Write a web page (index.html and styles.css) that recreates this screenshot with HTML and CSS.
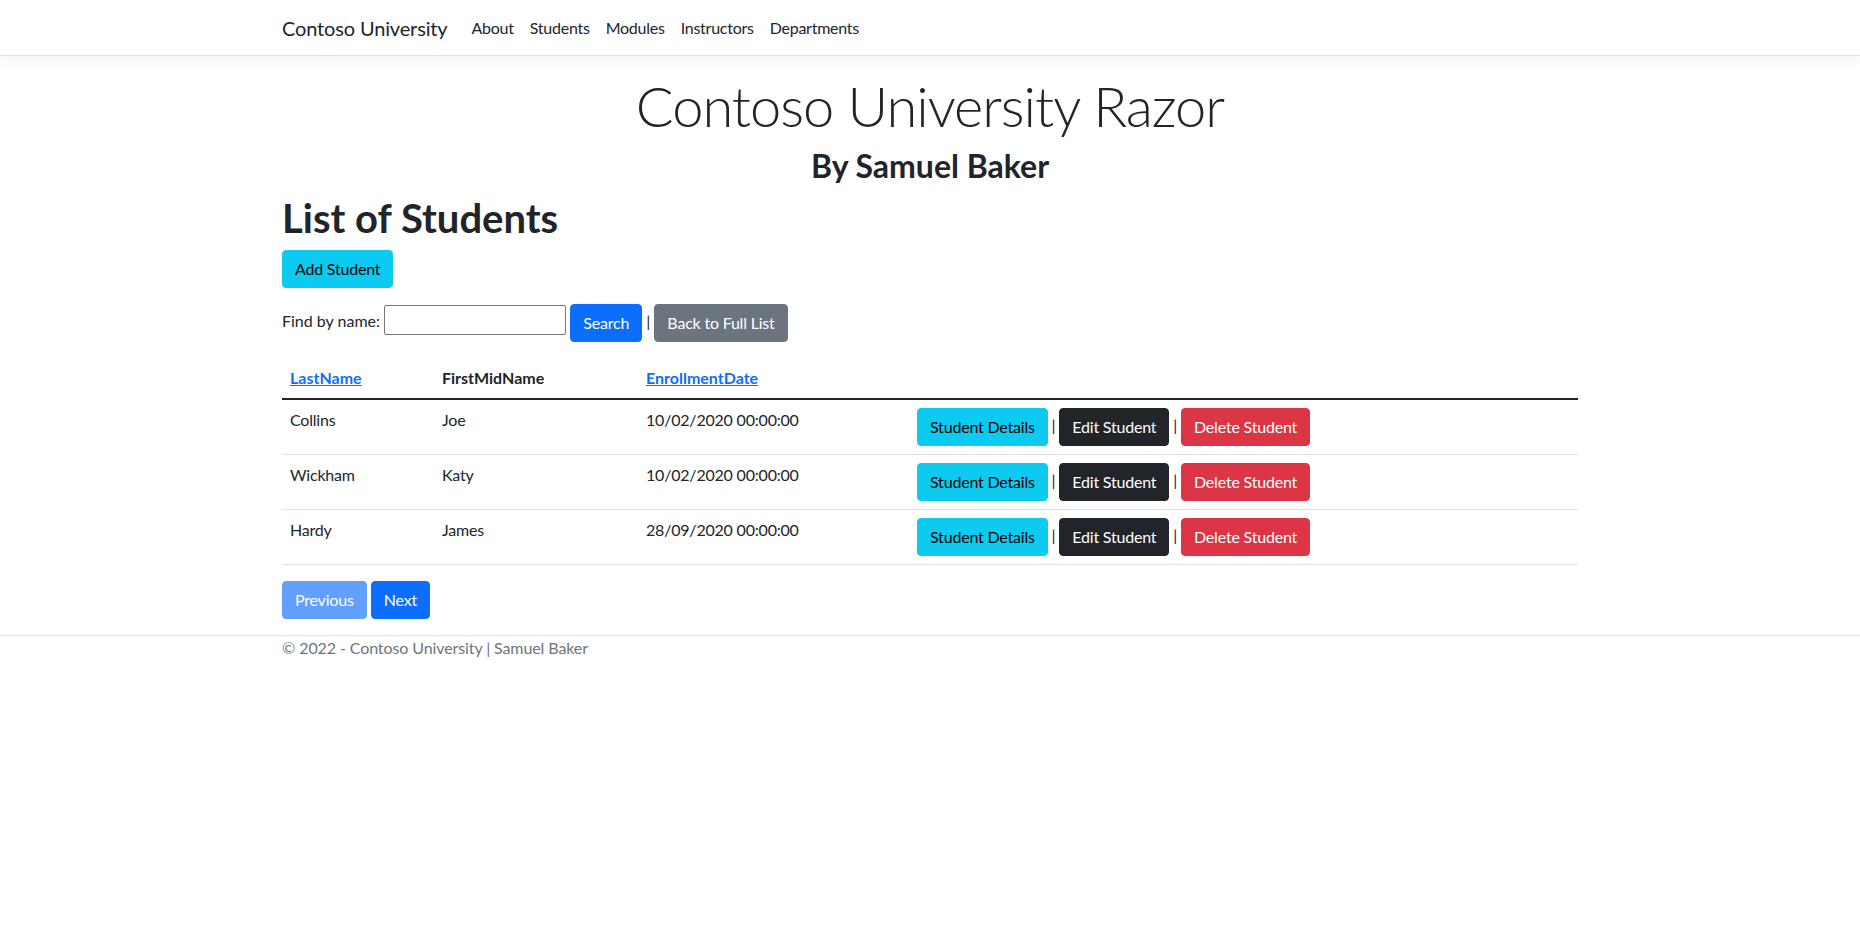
FILE: index.html
```html
<!DOCTYPE html>
<html lang="en">
<head>
<meta charset="utf-8">
<title>Students - Contoso University</title>
<link rel="stylesheet" href="styles.css">
</head>
<body>
<header>
  <nav class="navbar">
    <div class="container nav-inner">
      <a class="brand" href="#">Contoso University</a>
      <ul class="nav-links">
        <li><a href="#">About</a></li>
        <li><a href="#">Students</a></li>
        <li><a href="#">Modules</a></li>
        <li><a href="#">Instructors</a></li>
        <li><a href="#">Departments</a></li>
      </ul>
    </div>
  </nav>
</header>
<div class="container">
  <main class="main">
    <div class="hero">
      <h1 class="display">Contoso University Razor</h1>
      <h2 class="byline">By Samuel Baker</h2>
    </div>
    <h1 class="page-title">List of Students</h1>
    <p class="para"><a class="btn btn-info" href="#">Add Student</a></p>
    <form class="search-form">
      <p class="para">Find by name: <input type="text" class="search-input"> <input type="submit" value="Search" class="btn btn-primary"> | <a class="btn btn-secondary" href="#">Back to Full List</a></p>
    </form>
    <table class="table">
      <thead>
        <tr>
          <th class="c1"><a href="#">LastName</a></th>
          <th class="c2">FirstMidName</th>
          <th class="c3"><a href="#">EnrollmentDate</a></th>
          <th class="c4"></th>
        </tr>
      </thead>
      <tbody>
        <tr>
          <td>Collins</td>
          <td>Joe</td>
          <td>10/02/2020 00:00:00</td>
          <td><a class="btn btn-info" href="#">Student Details</a> | <a class="btn btn-dark" href="#">Edit Student</a> | <a class="btn btn-danger" href="#">Delete Student</a></td>
        </tr>
        <tr>
          <td>Wickham</td>
          <td>Katy</td>
          <td>10/02/2020 00:00:00</td>
          <td><a class="btn btn-info" href="#">Student Details</a> | <a class="btn btn-dark" href="#">Edit Student</a> | <a class="btn btn-danger" href="#">Delete Student</a></td>
        </tr>
        <tr>
          <td>Hardy</td>
          <td>James</td>
          <td>28/09/2020 00:00:00</td>
          <td><a class="btn btn-info" href="#">Student Details</a> | <a class="btn btn-dark" href="#">Edit Student</a> | <a class="btn btn-danger" href="#">Delete Student</a></td>
        </tr>
      </tbody>
    </table>
    <a class="btn btn-primary disabled" href="#">Previous</a>
    <a class="btn btn-primary" href="#">Next</a>
  </main>
</div>
<footer class="footer">
  <div class="container">© 2022 - Contoso University | Samuel Baker</div>
</footer>
</body>
</html>
```

FILE: styles.css
```css
* { box-sizing: border-box; }
html { font-size: 16px; }
body {
  margin: 0;
  font-family: Lato, "Liberation Sans", sans-serif;
  font-size: 16px;
  line-height: 1.5;
  color: #212529;
  background: #fff;
}
a { color: #0d6efd; }
.container { width: 1320px; margin: 0 auto; padding: 0 12px; }

.navbar {
  background: #fff;
  border-bottom: 1px solid #dee2e6;
  box-shadow: 0 4px 12px rgba(0,0,0,.05);
  margin-bottom: 16px;
  padding: 8px 0 7px;
}
.nav-inner { display: flex; align-items: center; }
.brand {
  font-size: 20px;
  line-height: 30px;
  padding: 5px 0;
  margin-right: 16px;
  color: #212529;
  text-decoration: none;
  letter-spacing: -0.15px;
}
.nav-links { display: flex; list-style: none; margin: 0; padding: 0; }
.nav-links a {
  display: block;
  padding: 8px;
  color: #212529;
  text-decoration: none;
  letter-spacing: -0.25px;
}

.main { padding-bottom: 16px; }
.hero { text-align: center; }
.display {
  font-size: 56px;
  font-weight: 300;
  line-height: 1.2;
  margin: 0 0 8px;
  letter-spacing: -1px;
}
.byline { font-size: 32px; font-weight: 700; line-height: 1.2; margin: 0 0 8px; }
.page-title { font-size: 40px; font-weight: 700; line-height: 1.2; margin: 0 0 8px; }
.para { margin: 0 0 16px; }

.btn {
  display: inline-block;
  font-family: inherit;
  font-size: 16px;
  line-height: 24px;
  padding: 6px 12px;
  border: 1px solid transparent;
  border-radius: 4px;
  text-decoration: none;
  vertical-align: middle;
  cursor: pointer;
  letter-spacing: -0.2px;
}
.btn-info { background: #0dcaf0; border-color: #0dcaf0; color: #000; }
.btn-primary { background: #0d6efd; border-color: #0d6efd; color: #fff; }
.btn-secondary { background: #6c757d; border-color: #6c757d; color: #fff; }
.btn-dark { background: #212529; border-color: #212529; color: #fff; }
.btn-danger { background: #dc3545; border-color: #dc3545; color: #fff; }
.btn.disabled { opacity: .65; pointer-events: none; }

.search-form { margin: 0; }
.search-input {
  font-family: inherit;
  font-size: 16px;
  line-height: 24px;
  width: 182px;
  height: 30px;
  padding: 1px 2px;
  border: 1px solid #767676;
  border-radius: 2px;
  margin: 0;
}

.table {
  width: 100%;
  border-collapse: collapse;
  table-layout: fixed;
  margin-bottom: 16px;
  vertical-align: top;
}
.table th, .table td {
  padding: 8px;
  text-align: left;
  border-bottom: 1px solid #dee2e6;
}
.table td { vertical-align: top; letter-spacing: -0.2px; }
.table thead th {
  vertical-align: bottom;
  border-bottom: 2px solid #212529;
  font-weight: 700;
}
.c1 { width: 152px; }
.c2 { width: 204px; }
.c3 { width: 271px; }

.footer {
  border-top: 1px solid #dee2e6;
  color: #6c757d;
  white-space: nowrap;
  line-height: 24px;
  letter-spacing: -0.1px;
}
```
